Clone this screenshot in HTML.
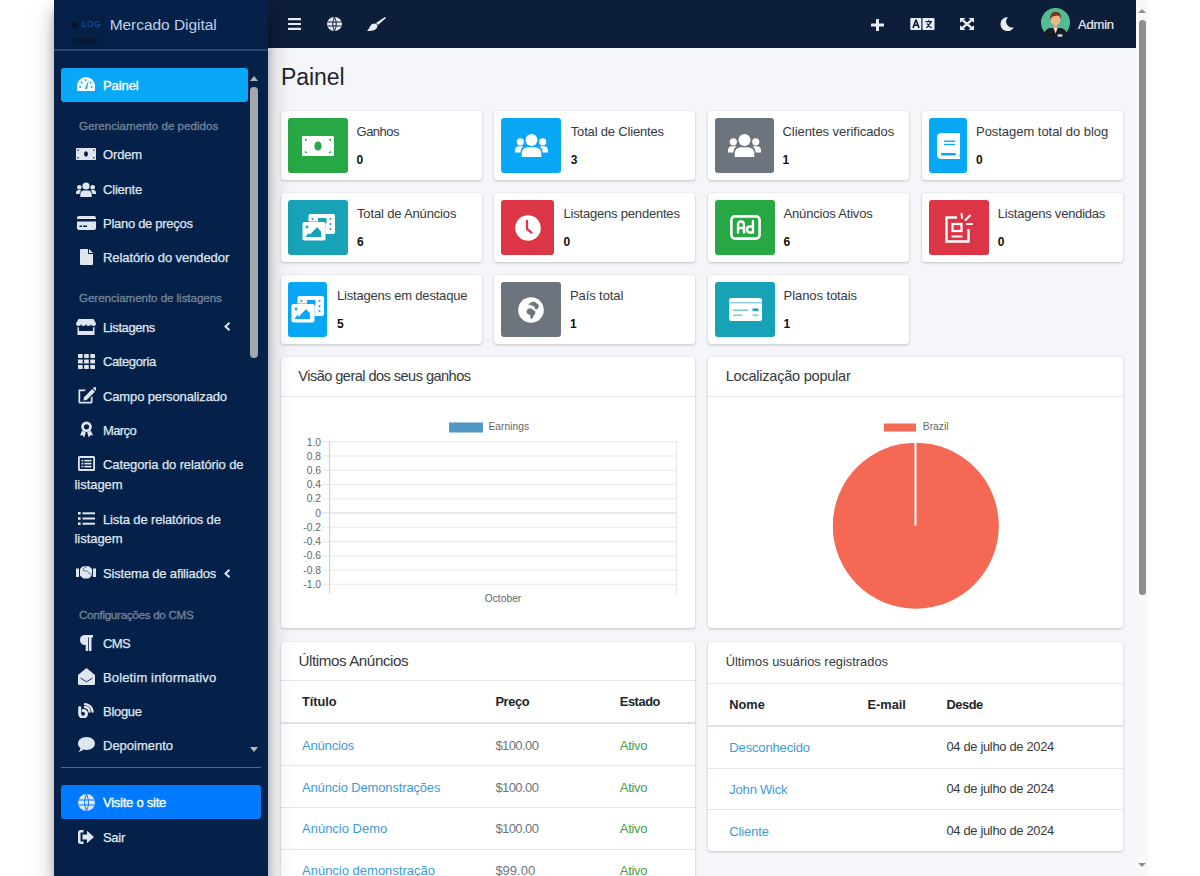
<!DOCTYPE html><html><head><meta charset="utf-8"><style>
*{box-sizing:border-box}
html,body{margin:0;padding:0}
body{width:1200px;height:876px;overflow:hidden;position:relative;background:#fff;font-family:"Liberation Sans",sans-serif}
.abs{position:absolute}
.ic{position:absolute;display:block}
#sb{position:absolute;left:54px;top:0;width:214px;height:876px;background:#062149;box-shadow:0 12px 24px rgba(0,0,0,.25),0 8.5px 8.5px rgba(0,0,0,.22);z-index:3;overflow:hidden}
#top{position:absolute;left:268px;top:0;width:868px;height:48px;background:#0d1e3a;z-index:2}
#main{position:absolute;left:268px;top:48px;width:868px;height:828px;background:#f4f6f9;overflow:hidden}
.t{position:absolute;white-space:nowrap;line-height:1}
.sbt{color:#dfe6ee;font-size:13px;-webkit-text-stroke:0.25px #dfe6ee}
.sbh{color:#73859c;font-size:11.6px;-webkit-text-stroke:0.3px #73859c}
.card{position:absolute;background:#fff;border-radius:3px;box-shadow:0 0 1px rgba(0,0,0,.125),0 1px 3px rgba(0,0,0,.2)}
.ib{position:absolute;border-radius:3px}
.lbl{position:absolute;white-space:nowrap;line-height:1;font-size:13px;color:#343a40}
.hdr{position:absolute;white-space:nowrap;line-height:1;color:#343a40}
.th{position:absolute;white-space:nowrap;line-height:1;font-weight:bold;color:#212529}
.lnk{position:absolute;white-space:nowrap;line-height:1;color:#3d9bd6}
.prc{position:absolute;white-space:nowrap;line-height:1;color:#6c757d}
.ok{position:absolute;white-space:nowrap;line-height:1;color:#3fa14a}
.dt{position:absolute;white-space:nowrap;line-height:1;color:#343a40}
.num{position:absolute;white-space:nowrap;line-height:1;font-size:12px;font-weight:bold;color:#111}
</style></head><body><div id="sb"><div class="abs" style="left:18px;top:16px;width:32px;height:32px;background:#052044"></div><div class="abs" style="left:18px;top:38px;width:24px;height:6px;background:#031b38"></div><div class="t" style="left:18px;top:21px;font-size:8px;font-weight:bold;color:#000814">U</div><div class="t" style="left:28px;top:21.2px;font-size:8.2px;font-weight:bold;color:#1a4596;letter-spacing:0.3px">LOG</div><div class="t" style="letter-spacing:-0.052px;left:55.7px;top:17px;font-size:15.5px;color:#bfd0e6;font-weight:normal">Mercado Digital</div><div class="abs" style="left:0;top:49px;width:214px;height:2px;background:#27466b"></div><div class="abs" style="left:7px;top:68px;width:187px;height:34px;background:#08a8f7;border-radius:3px"></div><svg class="ic" style="left:23.3px;top:76.85px" width="18" height="14.5" viewBox="0 0 18 14.5" ><path d="M0 9 A9 9 0 0 1 18 9 L18 12.5 Q18 14.5 16 14.5 L2 14.5 Q0 14.5 0 12.5Z" fill="#fff"/><path d="M8 11.4 L11.6 3.2 L10.2 11.8 Q9 12.6 8 11.4Z" fill="#08a8f7"/><circle cx="4.6" cy="5.4" r="1" fill="#08a8f7"/><circle cx="8.6" cy="3.3" r="1" fill="#08a8f7"/><circle cx="13.5" cy="5.6" r="1" fill="#08a8f7"/><circle cx="3.2" cy="10" r="1" fill="#08a8f7"/><circle cx="14.6" cy="10" r="1" fill="#08a8f7"/></svg><div class="t sbt" style="letter-spacing:-0.080px;left:49px;top:79.4px;color:#fff;-webkit-text-stroke:0.35px #fff">Painel</div><div class="t sbt" style="letter-spacing:-0.140px;left:49px;top:148.4px">Ordem</div><svg class="ic" style="left:22.0px;top:148.2px" width="20" height="12" viewBox="0 0 20 12" ><rect width="20" height="12" rx="0.8" fill="#dfe6ee"/><ellipse cx="10" cy="6" rx="2" ry="2.7" fill="#062149"/><circle cx="2.2" cy="2.2" r="0.8" fill="#062149"/><circle cx="17.8" cy="2.2" r="0.8" fill="#062149"/><circle cx="2.2" cy="9.8" r="0.8" fill="#062149"/><circle cx="17.8" cy="9.8" r="0.8" fill="#062149"/></svg><div class="t sbt" style="letter-spacing:-0.200px;left:49px;top:183.2px">Cliente</div><svg class="ic" style="left:22.0px;top:181.5px" width="20" height="15" viewBox="0 0 20 15" ><circle cx="10" cy="4" r="3.6" fill="#dfe6ee"/><path d="M4.3 15 L4.3 12.6 Q4.3 8.6 8.3 8.6 L11.7 8.6 Q15.7 8.6 15.7 12.6 L15.7 15Z" fill="#dfe6ee"/><circle cx="3.3" cy="5.2" r="2.3" fill="#dfe6ee"/><circle cx="16.7" cy="5.2" r="2.3" fill="#dfe6ee"/><path d="M0 12 L0 10.8 Q0 7.9 2.7 7.9 L5.3 7.9 Q3.5 9.6 3.5 12Z" fill="#dfe6ee"/><path d="M20 12 L20 10.8 Q20 7.9 17.3 7.9 L14.7 7.9 Q16.5 9.6 16.5 12Z" fill="#dfe6ee"/></svg><div class="t sbt" style="letter-spacing:-0.286px;left:49px;top:217.0px">Plano de preços</div><svg class="ic" style="left:22.5px;top:215.8px" width="19" height="14" viewBox="0 0 19 14" ><path d="M0 2 Q0 0 2 0 L17 0 Q19 0 19 2 L19 3 L0 3Z" fill="#dfe6ee"/><path d="M0 5.5 L19 5.5 L19 12 Q19 14 17 14 L2 14 Q0 14 0 12Z" fill="#dfe6ee"/><rect x="2.5" y="9.5" width="2.5" height="1.5" fill="#062149"/><rect x="6" y="9.5" width="4" height="1.5" fill="#062149"/></svg><div class="t sbt" style="letter-spacing:-0.084px;left:49px;top:250.9px">Relatório do vendedor</div><svg class="ic" style="left:25.5px;top:248.7px" width="13" height="16" viewBox="0 0 13 16" ><path d="M0 1 Q0 0 1 0 L8 0 L8 4.2 Q8 5 8.8 5 L13 5 L13 15 Q13 16 12 16 L1 16 Q0 16 0 15Z" fill="#dfe6ee"/><path d="M9 0 L13 4 L9 4Z" fill="#dfe6ee"/></svg><div class="t sbt" style="letter-spacing:-0.410px;left:49px;top:321.0px">Listagens</div><svg class="ic" style="left:22.0px;top:318.8px" width="20" height="16" viewBox="0 0 20 16" ><path d="M2.5 0 L17.5 0 L20 4.5 Q20 7 17.5 7 Q15 7 15 5 Q15 7 12.5 7 Q10 7 10 5 Q10 7 7.5 7 Q5 7 5 5 Q5 7 2.5 7 Q0 7 0 4.5Z" fill="#dfe6ee"/><path d="M1.5 8 L1.5 16 L18.5 16 L18.5 8 L17 8.5 L17 12 L3 12 L3 8.5Z" fill="#dfe6ee"/></svg><div class="t sbt" style="letter-spacing:-0.400px;left:49px;top:355.3px">Categoria</div><svg class="ic" style="left:23.5px;top:353.6px" width="17" height="15" viewBox="0 0 17 15" ><rect x="0" y="0" width="4.7" height="4" rx="0.4" fill="#dfe6ee"/><rect x="0" y="5.5" width="4.7" height="4" rx="0.4" fill="#dfe6ee"/><rect x="0" y="11" width="4.7" height="4" rx="0.4" fill="#dfe6ee"/><rect x="6.1" y="0" width="4.7" height="4" rx="0.4" fill="#dfe6ee"/><rect x="6.1" y="5.5" width="4.7" height="4" rx="0.4" fill="#dfe6ee"/><rect x="6.1" y="11" width="4.7" height="4" rx="0.4" fill="#dfe6ee"/><rect x="12.3" y="0" width="4.7" height="4" rx="0.4" fill="#dfe6ee"/><rect x="12.3" y="5.5" width="4.7" height="4" rx="0.4" fill="#dfe6ee"/><rect x="12.3" y="11" width="4.7" height="4" rx="0.4" fill="#dfe6ee"/></svg><div class="t sbt" style="letter-spacing:-0.133px;left:49px;top:390.0px">Campo personalizado</div><svg class="ic" style="left:22.5px;top:387.3px" width="19" height="17" viewBox="0 0 19 17" ><path d="M1.5 2.5 L9 2.5 L7.3 4.2 L3.2 4.2 L3.2 14.8 L13.8 14.8 L13.8 10.7 L15.5 9 L15.5 15 Q15.5 16.5 14 16.5 L3 16.5 Q1.5 16.5 1.5 15Z" fill="#dfe6ee"/><path d="M7 10.2 L15.2 2 L17.9 4.7 L9.7 12.9 L6.4 13.5Z" fill="#dfe6ee"/><path d="M16 1.2 L17.2 0 Q17.9 -0.3 18.5 0.3 L19 0.8 Q19.5 1.5 19 2.1 L18.7 3.9Z" fill="#dfe6ee"/></svg><div class="t sbt" style="letter-spacing:-0.600px;left:49px;top:423.9px">Março</div><svg class="ic" style="left:25.5px;top:421.2px" width="13" height="17" viewBox="0 0 13 17" ><circle cx="6.5" cy="5.8" r="5.3" fill="#dfe6ee"/><circle cx="6.5" cy="5.8" r="2.6" fill="#062149"/><path d="M2.2 9.5 L0 14.5 L2.6 14.3 L4.2 16.5 L5.8 11.5Z" fill="#dfe6ee"/><path d="M10.8 9.5 L13 14.5 L10.4 14.3 L8.8 16.5 L7.2 11.5Z" fill="#dfe6ee"/></svg><div class="t sbt" style="letter-spacing:-0.108px;left:49px;top:457.8px">Categoria do relatório de</div><svg class="ic" style="left:23.5px;top:456.1px" width="17" height="15" viewBox="0 0 17 15" ><path d="M0 1.5 Q0 0 1.5 0 L15.5 0 Q17 0 17 1.5 L17 13.5 Q17 15 15.5 15 L1.5 15 Q0 15 0 13.5Z M1.8 2 L1.8 13 L15.2 13 L15.2 2Z" fill="#dfe6ee" fill-rule="evenodd"/><rect x="3.5" y="3.8" width="1.8" height="1.6" fill="#dfe6ee"/><rect x="6.3" y="3.8" width="7.2" height="1.6" fill="#dfe6ee"/><rect x="3.5" y="6.8" width="1.8" height="1.6" fill="#dfe6ee"/><rect x="6.3" y="6.8" width="7.2" height="1.6" fill="#dfe6ee"/><rect x="3.5" y="9.8" width="1.8" height="1.6" fill="#dfe6ee"/><rect x="6.3" y="9.8" width="7.2" height="1.6" fill="#dfe6ee"/></svg><div class="t sbt" style="letter-spacing:-0.132px;left:49px;top:512.9px">Lista de relatórios de</div><svg class="ic" style="left:23.5px;top:512.2px" width="17" height="13" viewBox="0 0 17 13" ><rect x="0" y="0" width="2.6" height="2.6" fill="#dfe6ee"/><rect x="4.5" y="0.3" width="12.5" height="2" fill="#dfe6ee"/><rect x="0" y="5.2" width="2.6" height="2.6" fill="#dfe6ee"/><rect x="4.5" y="5.5" width="12.5" height="2" fill="#dfe6ee"/><rect x="0" y="10.4" width="2.6" height="2.6" fill="#dfe6ee"/><rect x="4.5" y="10.700000000000001" width="12.5" height="2" fill="#dfe6ee"/></svg><div class="t sbt" style="letter-spacing:-0.162px;left:49px;top:567.4px">Sistema de afiliados</div><svg class="ic" style="left:22.0px;top:565.5px" width="20" height="13" viewBox="0 0 20 13" ><rect x="0" y="2.5" width="3" height="8.5" fill="#dfe6ee"/><rect x="17" y="2.5" width="3" height="8.5" fill="#dfe6ee"/><path d="M6.8 0.3 L13.2 0.3 L16 3 L16 9.6 L12.6 12.6 L7.4 12.6 L4 9.6 L4 3Z" fill="#dfe6ee"/><path d="M10 1.2 Q6.8 1.8 7 4.2 Q7.8 5.8 10.2 4.6 L16 9.4" fill="none" stroke="#5b6b80" stroke-width="0.9"/></svg><div class="t sbt" style="letter-spacing:-0.600px;left:49px;top:636.7px">CMS</div><svg class="ic" style="left:25.5px;top:634.5px" width="13" height="16" viewBox="0 0 13 16" ><path d="M5.5 0 L13 0 L13 2.4 L11.5 2.4 L11.5 16 L9 16 L9 2.4 L8.2 2.4 L8.2 16 L5.7 16 L5.7 10 Q0 10 0 5 Q0 0 5.5 0Z" fill="#dfe6ee"/></svg><div class="t sbt" style="letter-spacing:0.143px;left:49px;top:671.1px">Boletim informativo</div><svg class="ic" style="left:23.5px;top:668.4px" width="17" height="17" viewBox="0 0 17 17" ><path d="M0 7 L8.5 0 L17 7 L17 15.5 Q17 17 15.5 17 L1.5 17 Q0 17 0 15.5Z" fill="#dfe6ee"/><path d="M2.5 10 L8.5 13.8 L14.5 10" fill="none" stroke="#062149" stroke-width="0.9"/></svg><div class="t sbt" style="letter-spacing:-0.288px;left:49px;top:705.0px">Blogue</div><svg class="ic" style="left:24.0px;top:703.3px" width="16" height="15" viewBox="0 0 16 15" ><path d="M1.7 4.5 L1.7 10.8 A3.4 3.4 0 1 0 5.1 7.4" fill="none" stroke="#dfe6ee" stroke-width="3" stroke-linecap="round"/><path d="M7 4 A5 5 0 0 1 11.5 8.6" fill="none" stroke="#dfe6ee" stroke-width="2.3" stroke-linecap="round"/><path d="M7 1.2 A7.9 7.9 0 0 1 14.6 8.6" fill="none" stroke="#dfe6ee" stroke-width="2.3" stroke-linecap="round"/></svg><div class="t sbt" style="left:49px;top:739.0px">Depoimento</div><svg class="ic" style="left:23.5px;top:737.3px" width="17" height="15" viewBox="0 0 17 15" ><path d="M8.5 0 C13.2 0 17 2.9 17 6.5 C17 10.1 13.2 13 8.5 13 C7.3 13 6.3 12.8 5.3 12.5 C4 13.8 2.3 14.7 0.2 14.9 C1.3 13.9 2.3 12.6 2.4 11.2 C0.9 10 0 8.4 0 6.5 C0 2.9 3.8 0 8.5 0Z" fill="#dfe6ee"/></svg><div class="t sbt" style="letter-spacing:-0.300px;left:49px;top:830.9px">Sair</div><svg class="ic" style="left:24.0px;top:829.7px" width="16" height="14" viewBox="0 0 16 14" ><path d="M5.5 0 L2.5 0 Q0 0 0 2.5 L0 11.5 Q0 14 2.5 14 L5.5 14 L5.5 11.5 L2.5 11.5 L2.5 2.5 L5.5 2.5Z" fill="#dfe6ee"/><path d="M9 0.8 L16 7 L9 13.2 L9 9.5 L4.5 9.5 L4.5 4.5 L9 4.5Z" fill="#dfe6ee"/></svg><div class="t sbt" style="letter-spacing:-0.047px;left:20.5px;top:478.1px">listagem</div><div class="t sbt" style="letter-spacing:-0.047px;left:20.5px;top:532.4px">listagem</div><div class="t sbh" style="left:25px;top:120.1px">Gerenciamento de pedidos</div><div class="t sbh" style="letter-spacing:-0.059px;left:25px;top:292.1px">Gerenciamento de listagens</div><div class="t sbh" style="letter-spacing:-0.274px;left:25px;top:608.5px">Configurações do CMS</div><svg class="ic" style="left:170px;top:322.1px" width="7" height="9" viewBox="0 0 7 9" ><path d="M5.5 0.8 L1.5 4.5 L5.5 8.2" fill="none" stroke="#dfe6ee" stroke-width="2"/></svg><svg class="ic" style="left:170px;top:568.5px" width="7" height="9" viewBox="0 0 7 9" ><path d="M5.5 0.8 L1.5 4.5 L5.5 8.2" fill="none" stroke="#dfe6ee" stroke-width="2"/></svg><div class="abs" style="left:196px;top:87px;width:8px;height:271px;background:#a4a7ab;border-radius:4px"></div><svg class="ic" style="left:196px;top:76px" width="8" height="5" viewBox="0 0 8 5" ><path d="M0 5 L4 0 L8 5Z" fill="#b5b9be"/></svg><svg class="ic" style="left:196px;top:747px" width="8" height="5" viewBox="0 0 8 5" ><path d="M0 0 L4 5 L8 0Z" fill="#b5b9be"/></svg><div class="abs" style="left:7px;top:767px;width:200px;height:1px;background:#4f6a8a"></div><div class="abs" style="left:7px;top:785px;width:200px;height:34px;background:#007bff;border-radius:3px"></div><svg class="ic" style="left:23.5px;top:793.5px" width="17" height="17" viewBox="0 0 17 17" ><circle cx="8.5" cy="8.5" r="8.5" fill="#dfe6ee"/><path d="M0.5 6 L16.5 6 M0.5 11 L16.5 11 M8.5 0 Q4.5 8.5 8.5 17 M8.5 0 Q12.5 8.5 8.5 17" fill="none" stroke="#007bff" stroke-width="1"/></svg><div class="t sbt" style="letter-spacing:-0.249px;left:49px;top:796.4px;color:#fff;-webkit-text-stroke:0.35px #fff">Visite o site</div></div><div id="top"><svg class="ic" style="left:20px;top:18px" width="13" height="12" viewBox="0 0 13 12" ><rect x="0" y="0" width="13" height="2.2" rx="0.5" fill="#e8edf3"/><rect x="0" y="4.9" width="13" height="2.2" rx="0.5" fill="#e8edf3"/><rect x="0" y="9.8" width="13" height="2.2" rx="0.5" fill="#e8edf3"/></svg><svg class="ic" style="left:59px;top:17px" width="15" height="14" viewBox="0 0 15 14" ><ellipse cx="7.5" cy="7" rx="7.5" ry="7" fill="#e8edf3"/><path d="M0.3 5 L14.7 5 M0.3 9 L14.7 9 M7.5 0 Q4 7 7.5 14 M7.5 0 Q11 7 7.5 14" fill="none" stroke="#0d1e3a" stroke-width="1"/></svg><svg class="ic" style="left:99px;top:17px" width="19" height="14" viewBox="0 0 19 14" ><path d="M9 6 L18 0 L19 1 L11 8Z" fill="#e8edf3"/><path d="M8 6.5 Q10.5 7 10.5 9 Q10 12.5 6 13.5 Q2 14 0 14 Q2 12 3 9.5 Q4.5 6.3 8 6.5Z" fill="#e8edf3"/></svg><svg class="ic" style="left:602.5px;top:18.5px" width="13" height="12" viewBox="0 0 13 12" ><rect x="5" y="0" width="3" height="12" rx="0.6" fill="#e8edf3"/><rect x="0" y="4.5" width="13" height="3" rx="0.6" fill="#e8edf3"/></svg><svg class="ic" style="left:641.5px;top:18px" width="25" height="12" viewBox="0 0 25 12" ><rect x="0.3" y="0" width="11" height="12" rx="0.8" fill="#e8edf3"/><rect x="12.5" y="0" width="12" height="12" rx="0.8" fill="#e8edf3"/><path d="M3 10 L5.8 2.2 L6.2 2.2 L9 10 M4.2 7.2 L7.8 7.2" stroke="#0d1e3a" stroke-width="1.6" fill="none"/><path d="M15.5 3.6 L22 3.6 M18.8 2.2 L18.8 3.6 M16.5 9.8 L21 4.2 M17 5.5 Q19 8.5 21.5 9.8" stroke="#0d1e3a" stroke-width="1.3" fill="none"/></svg><svg class="ic" style="left:692px;top:18px" width="14" height="12" viewBox="0 0 14 12" ><path d="M2.5 2.2 L11.5 9.8 M11.5 2.2 L2.5 9.8" stroke="#e8edf3" stroke-width="2.4"/><path d="M0 0 L5.5 0 L0 4.8Z M14 0 L8.5 0 L14 4.8Z M0 12 L5.5 12 L0 7.2Z M14 12 L8.5 12 L14 7.2Z" fill="#e8edf3"/></svg><svg class="ic" style="left:732px;top:17px" width="14" height="14" viewBox="0 0 14 14" ><path d="M8 0.2 A7 7 0 1 0 13.8 10.3 A6 6 0 0 1 8 0.2Z" fill="#e8edf3"/></svg><svg class="ic" style="left:773px;top:8px" width="29" height="29" viewBox="0 0 29 29" ><defs><clipPath id="avc"><circle cx="14.5" cy="14.5" r="14.5"/></clipPath></defs><circle cx="14.5" cy="14.5" r="14.5" fill="#52bd95"/><g clip-path="url(#avc)"><path d="M3 31 L3.5 25 Q4.5 21 9.5 20 L19.5 20 Q24.5 21 25.5 25 L26 31Z" fill="#171b24"/></g><path d="M3.5 26 Q4.5 21 9.5 20 L19.5 20 Q24.5 21 25.5 26 L25.5 29 L3.5 29Z" fill="#171b24"/><path d="M12.3 19.6 L16.7 19.6 L14.6 25.5Z" fill="#e6e9ee"/><rect x="16.5" y="26.3" width="5" height="2.4" rx="0.6" fill="#c9d3de"/><path d="M12.8 16 L16.2 16 L16.2 19.8 L12.8 19.8Z" fill="#e2a57f"/><ellipse cx="14.5" cy="12" rx="4.9" ry="5.4" fill="#f0b48a"/><path d="M9.2 12 Q8.3 4.2 14.2 3.8 Q20.6 3.6 19.9 11 Q19 7.6 16.8 7.4 Q13.5 7.6 11.2 8.8 Q9.8 9.8 9.2 12Z" fill="#7a3517"/></svg><div class="t" style="letter-spacing:-0.200px;left:810px;top:17.5px;font-size:13px;color:#e8edf3;-webkit-text-stroke:0.2px #e8edf3">Admin</div></div><div id="main"><div class="t" style="letter-spacing:-0.080px;left:13px;top:17.5px;font-size:23px;color:#212529">Painel</div><div class="card" style="left:13px;top:63px;width:201px;height:69px"></div><div class="ib" style="left:20px;top:70px;width:60px;height:55px;background:#28a745"></div><svg class="ic" style="left:34.0px;top:87.5px" width="32" height="20" viewBox="0 0 32 20" ><rect width="32" height="20" rx="1.2" fill="#fff"/><ellipse cx="16" cy="10" rx="3.6" ry="4.6" fill="#28a745"/><path d="M3 5.5 L3 3 L5.5 3Z M29 5.5 L29 3 L26.5 3Z M3 14.5 L3 17 L5.5 17Z M29 14.5 L29 17 L26.5 17Z" fill="#28a745"/></svg><div class="lbl" style="letter-spacing:-0.544px;left:88.6px;top:76.90px">Ganhos</div><div class="num" style="left:88.6px;top:105.84px">0</div><div class="card" style="left:226px;top:63px;width:201px;height:69px"></div><div class="ib" style="left:233px;top:70px;width:60px;height:55px;background:#08a8f7"></div><svg class="ic" style="left:246.5px;top:86.0px" width="33" height="23" viewBox="0 0 33 23" ><circle cx="16.5" cy="6" r="6" fill="#fff"/><path d="M6.7 23 L6.7 20 Q6.7 13.2 13.5 13.2 L19.5 13.2 Q26.3 13.2 26.3 20 L26.3 23Z" fill="#fff"/><circle cx="5.3" cy="7.8" r="3.6" fill="#fff"/><circle cx="27.7" cy="7.8" r="3.6" fill="#fff"/><path d="M0 18.5 L0 16.5 Q0 12.2 4.2 12.2 L8.3 12.2 Q5.4 14.6 5.4 18.5Z" fill="#fff"/><path d="M33 18.5 L33 16.5 Q33 12.2 28.8 12.2 L24.7 12.2 Q27.6 14.6 27.6 18.5Z" fill="#fff"/></svg><div class="lbl" style="letter-spacing:-0.180px;left:302.8px;top:76.90px">Total de Clientes</div><div class="num" style="left:302.8px;top:105.84px">3</div><div class="card" style="left:440px;top:63px;width:201px;height:69px"></div><div class="ib" style="left:447px;top:70px;width:59px;height:55px;background:#6c757d"></div><svg class="ic" style="left:460.0px;top:86.0px" width="33" height="23" viewBox="0 0 33 23" ><circle cx="16.5" cy="6" r="6" fill="#fff"/><path d="M6.7 23 L6.7 20 Q6.7 13.2 13.5 13.2 L19.5 13.2 Q26.3 13.2 26.3 20 L26.3 23Z" fill="#fff"/><circle cx="5.3" cy="7.8" r="3.6" fill="#fff"/><circle cx="27.7" cy="7.8" r="3.6" fill="#fff"/><path d="M0 18.5 L0 16.5 Q0 12.2 4.2 12.2 L8.3 12.2 Q5.4 14.6 5.4 18.5Z" fill="#fff"/><path d="M33 18.5 L33 16.5 Q33 12.2 28.8 12.2 L24.7 12.2 Q27.6 14.6 27.6 18.5Z" fill="#fff"/></svg><div class="lbl" style="letter-spacing:-0.052px;left:514.5px;top:76.90px">Clientes verificados</div><div class="num" style="left:514.5px;top:105.84px">1</div><div class="card" style="left:654px;top:63px;width:201px;height:69px"></div><div class="ib" style="left:661px;top:70px;width:38px;height:55px;background:#08a8f7"></div><svg class="ic" style="left:668.5px;top:84.5px" width="23" height="26" viewBox="0 0 23 26" ><path d="M4.5 0 L23 0 L23 21 Q21.5 22.5 23 24 L23 26 L4.5 26 Q0 26 0 21.5 L0 4.5 Q0 0 4.5 0Z" fill="#fff"/><rect x="7" y="7.5" width="11" height="1.4" fill="#08a8f7"/><rect x="7" y="10.8" width="11" height="1.4" fill="#08a8f7"/><rect x="4" y="20" width="15" height="2.6" rx="1.3" fill="#08a8f7"/></svg><div class="lbl" style="letter-spacing:-0.038px;left:708px;top:76.90px">Postagem total do blog</div><div class="num" style="left:708px;top:105.84px">0</div><div class="card" style="left:13px;top:145px;width:201px;height:69px"></div><div class="ib" style="left:20px;top:152px;width:60px;height:55px;background:#17a2b8"></div><svg class="ic" style="left:33.5px;top:166.0px" width="33" height="27" viewBox="0 0 33 27" ><rect x="6.5" y="0" width="26.5" height="20" rx="2" fill="#fff"/><rect x="16" y="4" width="8.5" height="5.5" fill="#17a2b8"/><circle cx="10.5" cy="5" r="1.1" fill="#17a2b8"/><circle cx="28.5" cy="5" r="1.1" fill="#17a2b8"/><circle cx="28.5" cy="10" r="1.1" fill="#17a2b8"/><circle cx="28.5" cy="15" r="1.1" fill="#17a2b8"/><rect x="0" y="7.5" width="23.5" height="19.5" rx="2" fill="#17a2b8"/><rect x="0.5" y="8" width="23" height="18.5" rx="1.8" fill="#fff"/><circle cx="5" cy="13" r="1.4" fill="#17a2b8"/><path d="M3.5 23 L6.5 19 L8 20.5 L15 13 L19 17.5 L19 23Z" fill="#17a2b8"/></svg><div class="lbl" style="letter-spacing:-0.155px;left:89px;top:158.90px">Total de Anúncios</div><div class="num" style="left:89px;top:187.84px">6</div><div class="card" style="left:226px;top:145px;width:201px;height:69px"></div><div class="ib" style="left:233px;top:152px;width:53px;height:55px;background:#dc3545"></div><svg class="ic" style="left:246.5px;top:166.5px" width="26" height="26" viewBox="0 0 26 26" ><circle cx="13" cy="13" r="12.8" fill="#fff"/><path d="M12 6 L12 14 L16.5 17.6" fill="none" stroke="#dc3545" stroke-width="2.3" stroke-linecap="round" stroke-linejoin="round"/></svg><div class="lbl" style="letter-spacing:-0.205px;left:295.6px;top:158.90px">Listagens pendentes</div><div class="num" style="left:295.6px;top:187.84px">0</div><div class="card" style="left:440px;top:145px;width:201px;height:69px"></div><div class="ib" style="left:447px;top:152px;width:60px;height:55px;background:#28a745"></div><svg class="ic" style="left:461.5px;top:167.0px" width="31" height="25" viewBox="0 0 31 25" ><rect x="1.4" y="1.4" width="28.2" height="22.2" rx="3.5" fill="none" stroke="#fff" stroke-width="2.6"/><path d="M8 17.5 L8 10 Q8 6.5 11 6.5 Q14 6.5 14 10 L14 17.5 M8 13 L14 13" fill="none" stroke="#fff" stroke-width="2.4" stroke-linecap="round"/><path d="M23 6 L23 17.5 L20 17.5 Q17 17.5 17 14.5 Q17 11.5 20 11.5 L23 11.5" fill="none" stroke="#fff" stroke-width="2.4" stroke-linecap="round" stroke-linejoin="round"/></svg><div class="lbl" style="letter-spacing:-0.193px;left:515.6px;top:158.90px">Anúncios Ativos</div><div class="num" style="left:515.6px;top:187.84px">6</div><div class="card" style="left:654px;top:145px;width:201px;height:69px"></div><div class="ib" style="left:661px;top:152px;width:60px;height:55px;background:#dc3545"></div><svg class="ic" style="left:677.0px;top:164.5px" width="28" height="30" viewBox="0 0 28 30" ><path d="M12 4.5 L1.5 4.5 L1.5 28.5 L23.5 28.5 L23.5 16" fill="none" stroke="#fff" stroke-width="2.4"/><rect x="7.5" y="11" width="9" height="7" fill="none" stroke="#fff" stroke-width="2.2"/><path d="M7.5 23.5 L16.5 23.5" stroke="#fff" stroke-width="2.2" stroke-linecap="round"/><path d="M16.5 1 L17 5 M20.5 7 L25 2.5 M22 11 L27 11" stroke="#fff" stroke-width="2" stroke-linecap="round"/></svg><div class="lbl" style="letter-spacing:-0.219px;left:729.8px;top:158.90px">Listagens vendidas</div><div class="num" style="left:729.8px;top:187.84px">0</div><div class="card" style="left:13px;top:227px;width:201px;height:69px"></div><div class="ib" style="left:20px;top:234px;width:39px;height:55px;background:#08a8f7"></div><svg class="ic" style="left:23.0px;top:248.0px" width="33" height="27" viewBox="0 0 33 27" ><rect x="6.5" y="0" width="26.5" height="20" rx="2" fill="#fff"/><rect x="16" y="4" width="8.5" height="5.5" fill="#08a8f7"/><circle cx="10.5" cy="5" r="1.1" fill="#08a8f7"/><circle cx="28.5" cy="5" r="1.1" fill="#08a8f7"/><circle cx="28.5" cy="10" r="1.1" fill="#08a8f7"/><circle cx="28.5" cy="15" r="1.1" fill="#08a8f7"/><rect x="0" y="7.5" width="23.5" height="19.5" rx="2" fill="#08a8f7"/><rect x="0.5" y="8" width="23" height="18.5" rx="1.8" fill="#fff"/><circle cx="5" cy="13" r="1.4" fill="#08a8f7"/><path d="M3.5 23 L6.5 19 L8 20.5 L15 13 L19 17.5 L19 23Z" fill="#08a8f7"/></svg><div class="lbl" style="letter-spacing:-0.200px;left:69px;top:240.90px">Listagens em destaque</div><div class="num" style="left:69px;top:269.84px">5</div><div class="card" style="left:226px;top:227px;width:201px;height:69px"></div><div class="ib" style="left:233px;top:234px;width:60px;height:55px;background:#6c757d"></div><svg class="ic" style="left:250.0px;top:248.5px" width="26" height="26" viewBox="0 0 26 26" ><circle cx="13" cy="13" r="12.8" fill="#fff"/><path d="M10 7.5 Q13 5 16 4.5 Q19 6 21 8.5 Q21 11 18.5 12.5 Q16 13 17 10.5 Q15.5 8.5 10 7.5Z" fill="#6c757d"/><path d="M9 13 Q10.5 10.5 13.5 11.5 Q15 13 17.5 14.5 Q17.5 17 15.5 19 Q14.5 22 13 22.5 Q12 20.5 12.3 18 Q9.5 17.5 8.5 15.5Z" fill="#6c757d"/></svg><div class="lbl" style="letter-spacing:-0.100px;left:302px;top:240.90px">País total</div><div class="num" style="left:302px;top:269.84px">1</div><div class="card" style="left:440px;top:227px;width:201px;height:69px"></div><div class="ib" style="left:447px;top:234px;width:60px;height:55px;background:#17a2b8"></div><svg class="ic" style="left:460.5px;top:250.0px" width="33" height="23" viewBox="0 0 33 23" ><rect x="0" y="0" width="33" height="23" rx="2.2" fill="#fff"/><rect x="0" y="4.2" width="33" height="1.2" fill="#17a2b8" opacity=".6"/><rect x="4" y="11.5" width="15.5" height="1.4" fill="#17a2b8" opacity=".6"/><rect x="4" y="16.5" width="9.5" height="1.4" fill="#17a2b8" opacity=".6"/><rect x="23.5" y="10.5" width="6" height="2.6" fill="#17a2b8"/><rect x="23.5" y="16.4" width="6" height="1.4" fill="#17a2b8" opacity=".6"/></svg><div class="lbl" style="letter-spacing:-0.079px;left:515.6px;top:240.90px">Planos totais</div><div class="num" style="left:515.6px;top:269.84px">1</div><div class="card" style="left:13px;top:309px;width:414px;height:271px"></div><div class="card" style="left:440px;top:309px;width:415px;height:271px"></div><div class="abs" style="left:13px;top:348px;width:414px;height:1px;background:#e3e6ea"></div><div class="abs" style="left:440px;top:348px;width:415px;height:1px;background:#e3e6ea"></div><div class="hdr" style="letter-spacing:-0.554px;left:30.3px;top:321.14px;font-size:14.6px">Visão geral dos seus ganhos</div><div class="hdr" style="letter-spacing:-0.262px;left:457.7px;top:321.14px;font-size:14.6px">Localização popular</div><svg class="ic" style="left:0px;top:349px" width="868" height="231" viewBox="268 397 868 231"><rect x="449" y="422.5" width="34" height="10" fill="#4f97c4"/><text x="488.5" y="430.2" font-size="10.3" fill="#666" font-family="Liberation Sans">Earnings</text><line x1="322" y1="441.80" x2="676.5" y2="441.80" stroke="#e8e8e8" stroke-width="1.1"/><text x="321" y="445.50" font-size="10.3" fill="#666" text-anchor="end" font-family="Liberation Sans">1.0</text><line x1="322" y1="456.04" x2="676.5" y2="456.04" stroke="#e8e8e8" stroke-width="1.1"/><text x="321" y="459.74" font-size="10.3" fill="#666" text-anchor="end" font-family="Liberation Sans">0.8</text><line x1="322" y1="470.28" x2="676.5" y2="470.28" stroke="#e8e8e8" stroke-width="1.1"/><text x="321" y="473.98" font-size="10.3" fill="#666" text-anchor="end" font-family="Liberation Sans">0.6</text><line x1="322" y1="484.52" x2="676.5" y2="484.52" stroke="#e8e8e8" stroke-width="1.1"/><text x="321" y="488.22" font-size="10.3" fill="#666" text-anchor="end" font-family="Liberation Sans">0.4</text><line x1="322" y1="498.76" x2="676.5" y2="498.76" stroke="#e8e8e8" stroke-width="1.1"/><text x="321" y="502.46" font-size="10.3" fill="#666" text-anchor="end" font-family="Liberation Sans">0.2</text><line x1="322" y1="513.00" x2="676.5" y2="513.00" stroke="#d2d2d2" stroke-width="1.1"/><text x="321" y="516.70" font-size="10.3" fill="#666" text-anchor="end" font-family="Liberation Sans">0</text><line x1="322" y1="527.24" x2="676.5" y2="527.24" stroke="#e8e8e8" stroke-width="1.1"/><text x="321" y="530.94" font-size="10.3" fill="#666" text-anchor="end" font-family="Liberation Sans">-0.2</text><line x1="322" y1="541.48" x2="676.5" y2="541.48" stroke="#e8e8e8" stroke-width="1.1"/><text x="321" y="545.18" font-size="10.3" fill="#666" text-anchor="end" font-family="Liberation Sans">-0.4</text><line x1="322" y1="555.72" x2="676.5" y2="555.72" stroke="#e8e8e8" stroke-width="1.1"/><text x="321" y="559.42" font-size="10.3" fill="#666" text-anchor="end" font-family="Liberation Sans">-0.6</text><line x1="322" y1="569.96" x2="676.5" y2="569.96" stroke="#e8e8e8" stroke-width="1.1"/><text x="321" y="573.66" font-size="10.3" fill="#666" text-anchor="end" font-family="Liberation Sans">-0.8</text><line x1="322" y1="584.20" x2="676.5" y2="584.20" stroke="#e8e8e8" stroke-width="1.1"/><text x="321" y="587.90" font-size="10.3" fill="#666" text-anchor="end" font-family="Liberation Sans">-1.0</text><line x1="329.5" y1="441.5" x2="329.5" y2="594" stroke="#cfcfcf" stroke-width="1.1"/><line x1="676.5" y1="441.5" x2="676.5" y2="594" stroke="#e8e8e8" stroke-width="1.1"/><text x="503" y="601.5" font-size="10.3" fill="#666" text-anchor="middle" font-family="Liberation Sans">October</text><rect x="884" y="423.5" width="32" height="8" fill="#f56954"/><text x="922.8" y="430.2" font-size="10.3" fill="#666" font-family="Liberation Sans">Brazil</text><circle cx="915.8" cy="525.7" r="83" fill="#f56954"/><line x1="915.5" y1="442" x2="915.5" y2="525.7" stroke="#fff" stroke-width="2"/></svg><div class="card" style="left:13px;top:594px;width:414px;height:260px"></div><div class="card" style="left:440px;top:594px;width:415px;height:209px"></div><div class="hdr" style="letter-spacing:-0.422px;left:30.5px;top:604.73px;font-size:15.2px">Últimos Anúncios</div><div class="hdr" style="letter-spacing:0.030px;left:457.7px;top:608.06px;font-size:12.8px">Últimos usuários registrados</div><div class="abs" style="left:13px;top:632px;width:414px;height:1px;background:#e3e6ea"></div><div class="abs" style="left:13px;top:674px;width:414px;height:2px;background:#dee2e6"></div><div class="abs" style="left:13px;top:717px;width:414px;height:1px;background:#e3e6ea"></div><div class="abs" style="left:13px;top:758.5px;width:414px;height:1px;background:#e3e6ea"></div><div class="abs" style="left:13px;top:800.5px;width:414px;height:1px;background:#e3e6ea"></div><div class="abs" style="left:440px;top:634.5px;width:415px;height:1px;background:#e3e6ea"></div><div class="abs" style="left:440px;top:677px;width:415px;height:2px;background:#dee2e6"></div><div class="abs" style="left:440px;top:719.5px;width:415px;height:1px;background:#e3e6ea"></div><div class="abs" style="left:440px;top:761.2px;width:415px;height:1px;background:#e3e6ea"></div><div class="th" style="letter-spacing:-0.064px;left:34px;top:648.46px;font-size:12.8px">Título</div><div class="th" style="letter-spacing:-0.360px;left:227.4px;top:648.46px;font-size:12.8px">Preço</div><div class="th" style="letter-spacing:-0.416px;left:351.8px;top:648.46px;font-size:12.8px">Estado</div><div class="lnk" style="letter-spacing:-0.182px;left:34px;top:691.10px;font-size:13px">Anúncios</div><div class="prc" style="letter-spacing:-0.574px;left:227.4px;top:691.10px;font-size:13px">$100.00</div><div class="ok" style="letter-spacing:-0.300px;left:351.8px;top:691.10px;font-size:13px">Ativo</div><div class="lnk" style="letter-spacing:-0.160px;left:34px;top:732.70px;font-size:13px">Anúncio Demonstrações</div><div class="prc" style="letter-spacing:-0.574px;left:227.4px;top:732.70px;font-size:13px">$100.00</div><div class="ok" style="letter-spacing:-0.300px;left:351.8px;top:732.70px;font-size:13px">Ativo</div><div class="lnk" style="left:34px;top:774.40px;font-size:13px">Anúncio Demo</div><div class="prc" style="letter-spacing:-0.574px;left:227.4px;top:774.40px;font-size:13px">$100.00</div><div class="ok" style="letter-spacing:-0.300px;left:351.8px;top:774.40px;font-size:13px">Ativo</div><div class="lnk" style="left:34px;top:816.00px;font-size:13px">Anúncio demonstração</div><div class="prc" style="left:227.4px;top:816.00px;font-size:13px">$99.00</div><div class="ok" style="letter-spacing:-0.300px;left:351.8px;top:816.00px;font-size:13px">Ativo</div><div class="th" style="letter-spacing:-0.026px;left:461.3px;top:650.96px;font-size:12.8px">Nome</div><div class="th" style="letter-spacing:-0.032px;left:599.6px;top:650.96px;font-size:12.8px">E-mail</div><div class="th" style="letter-spacing:-0.400px;left:678.4px;top:650.96px;font-size:12.8px">Desde</div><div class="lnk" style="letter-spacing:-0.145px;left:461.3px;top:693.10px;font-size:13px">Desconhecido</div><div class="dt" style="letter-spacing:-0.304px;left:678.4px;top:693.18px;font-size:12.9px">04 de julho de 2024</div><div class="lnk" style="letter-spacing:-0.210px;left:461.3px;top:735.20px;font-size:13px">John Wick</div><div class="dt" style="letter-spacing:-0.304px;left:678.4px;top:735.28px;font-size:12.9px">04 de julho de 2024</div><div class="lnk" style="letter-spacing:-0.119px;left:461.3px;top:777.20px;font-size:13px">Cliente</div><div class="dt" style="letter-spacing:-0.304px;left:678.4px;top:777.28px;font-size:12.9px">04 de julho de 2024</div></div><div class="abs" style="left:1136px;top:0;width:12px;height:876px;background:#f8f8f8"></div><div class="abs" style="left:1138.5px;top:20px;width:7.5px;height:575px;background:#8e8e8e;border-radius:4px"></div><svg class="ic" style="left:1138px;top:9px" width="8" height="4" viewBox="0 0 8 4" ><path d="M0 4 L4 0 L8 4Z" fill="#8e8e8e"/></svg><svg class="ic" style="left:1138px;top:863px" width="8" height="4" viewBox="0 0 8 4" ><path d="M0 0 L4 4 L8 0Z" fill="#8e8e8e"/></svg></body></html>
